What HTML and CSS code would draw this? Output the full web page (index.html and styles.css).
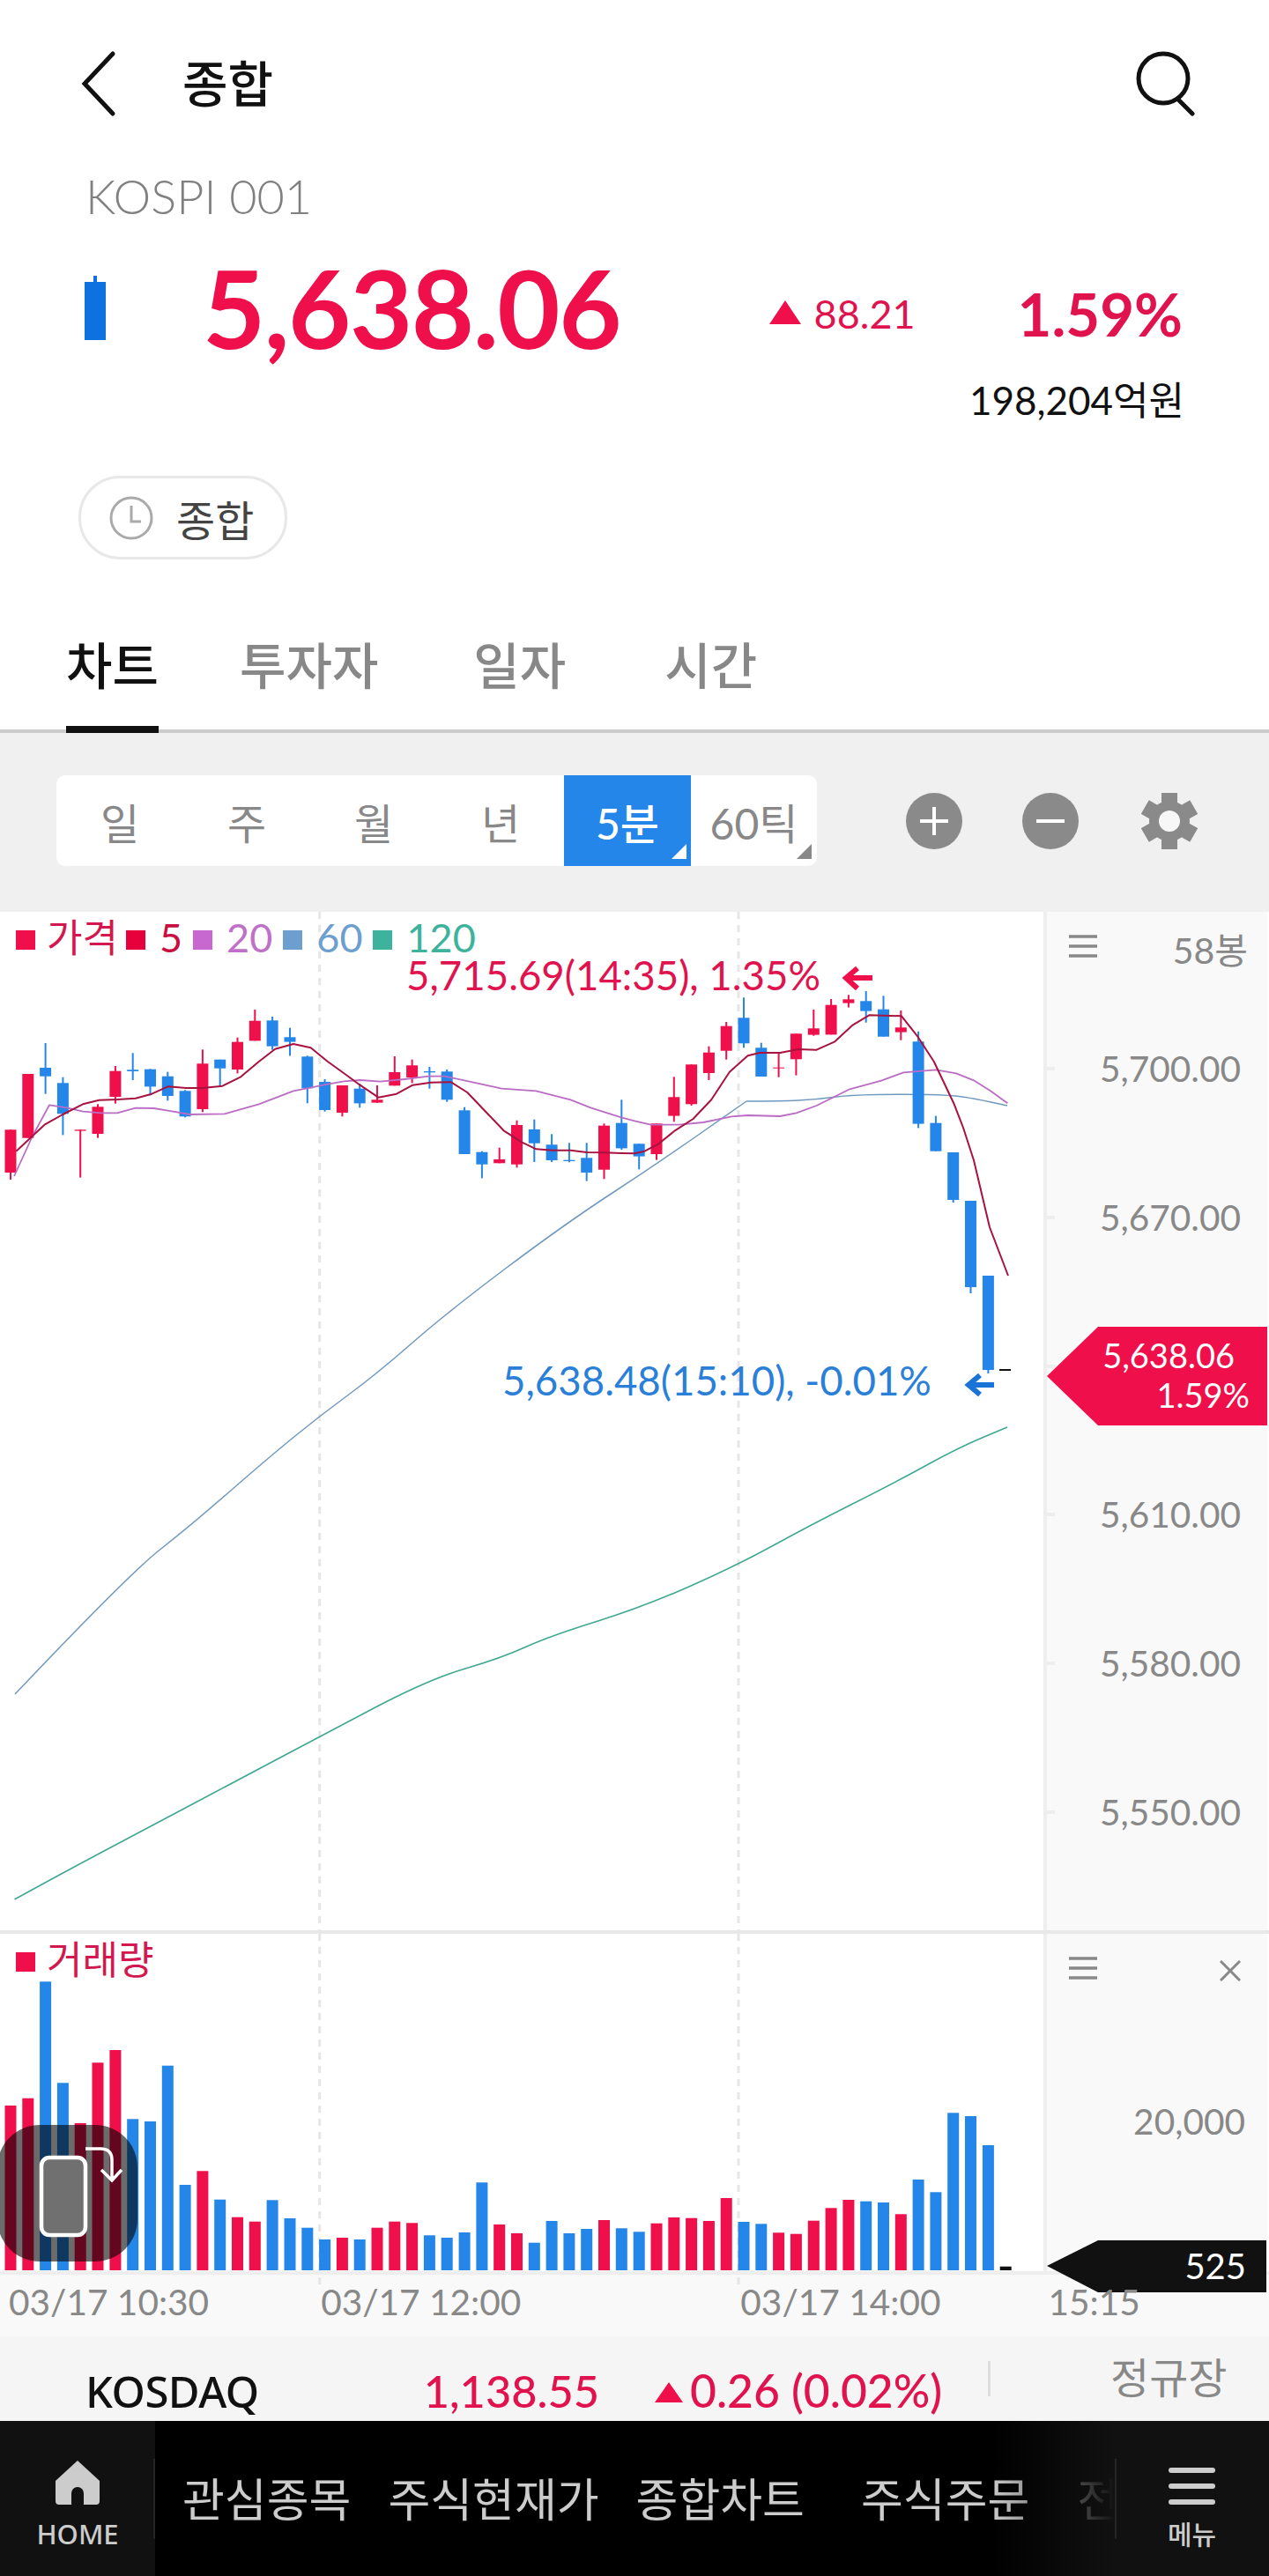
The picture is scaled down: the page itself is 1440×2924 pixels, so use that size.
FILE: index.html
```html
<!DOCTYPE html>
<html lang="ko">
<head>
<meta charset="utf-8">
<title>종합</title>
<link rel="stylesheet" href="styles.css">
</head>
<body>
<main class="page">
  <header class="topbar">
    <svg class="back" viewBox="0 0 40 76"><path d="M36 4 4 38l32 34"/></svg>
    <h1 class="title">종합</h1>
    <svg class="search" viewBox="0 0 72 74"><circle cx="33" cy="31" r="28"/><path d="M49 54 66 71"/></svg>
  </header>

  <section class="quote">
    <div class="code">KOSPI 001</div>
    <div class="price-row">
      <span class="mini-candle"></span>
      <span class="price">5,638.06</span>
      <span class="tri"></span>
      <span class="delta">88.21</span>
      <span class="pct">1.59%</span>
    </div>
    <div class="turnover">198,204억원</div>
    <div class="pill">
      <svg class="clock" viewBox="0 0 50 50"><circle cx="25" cy="25" r="23"/><path d="M25 11V29H36"/></svg>
      <span>종합</span>
    </div>
  </section>

  <nav class="tabs">
    <a class="tab active">차트</a>
    <a class="tab t2">투자자</a>
    <a class="tab t3">일자</a>
    <a class="tab t4">시간</a>
  </nav>

  <section class="toolbar">
    <div class="segment">
      <span class="seg">일</span>
      <span class="seg">주</span>
      <span class="seg">월</span>
      <span class="seg">년</span>
      <span class="seg on">5분</span>
      <span class="seg corner">60틱</span>
    </div>
    <div class="tools">
      <svg class="tool" viewBox="0 0 64 64"><circle cx="32" cy="32" r="32" class="fill"/><path d="M16 32H48M32 16V48" class="glyph"/></svg>
      <svg class="tool" viewBox="0 0 64 64"><circle cx="32" cy="32" r="32" class="fill"/><path d="M16 32H48" class="glyph"/></svg>
      <svg class="tool gear" viewBox="-32 -32 64 64">
        <circle r="23" class="fill"/>
        <rect x="-9" y="-32" width="18" height="16" class="fill"/>
        <rect x="-9" y="-32" width="18" height="16" class="fill" transform="rotate(60)"/>
        <rect x="-9" y="-32" width="18" height="16" class="fill" transform="rotate(120)"/>
        <rect x="-9" y="-32" width="18" height="16" class="fill" transform="rotate(180)"/>
        <rect x="-9" y="-32" width="18" height="16" class="fill" transform="rotate(240)"/>
        <rect x="-9" y="-32" width="18" height="16" class="fill" transform="rotate(300)"/>
        <circle r="12" class="hole"/>
      </svg>
    </div>
  </section>

  <section class="pane price-pane">
    <div class="plot">
      <svg id="priceSvg" class="plot-svg" viewBox="0 1035 1184 1156"></svg>
      <div class="legend">
        <span class="lg c-price"><i></i>가격</span>
        <span class="lg c-5"><i></i>5</span>
        <span class="lg c-20"><i></i>20</span>
        <span class="lg c-60"><i></i>60</span>
        <span class="lg c-120"><i></i>120</span>
      </div>
      <span class="note note-high">5,715.69(14:35), 1.35%</span>
      <span class="note note-low">5,638.48(15:10), -0.01%</span>
    </div>
    <div class="axis" id="priceAxis">
      <svg class="menu-lines" viewBox="0 0 32 26"><path d="M0 2H32M0 13H32M0 24H32"/></svg>
      <span class="count">58봉</span>
      <div class="tag tag-red"><span>5,638.06</span><span class="tag-pct">1.59%</span></div>
    </div>
  </section>

  <section class="pane volume-pane">
    <div class="plot">
      <svg id="volumeSvg" class="plot-svg" viewBox="0 2195 1184 383"></svg>
      <div class="legend vol-legend"><span class="lg c-price"><i></i>거래량</span></div>
      <div class="rotate">
        <svg viewBox="0 0 156 155"><rect x="47" y="37" width="50" height="88" rx="9" class="phone"/><path d="M97 27H114Q127 27 127 40V61M115 51 127 63 138 51" class="turn"/></svg>
      </div>
    </div>
    <div class="axis">
      <svg class="menu-lines" viewBox="0 0 32 26"><path d="M0 2H32M0 13H32M0 24H32"/></svg>
      <svg class="close" viewBox="0 0 24 24"><path d="M1 1 23 23M23 1 1 23"/></svg>
      <span class="tick vol-tick">20,000</span>
      <div class="tag tag-black"><span>525</span></div>
    </div>
  </section>

  <section class="time-axis">
    <span class="time t-a">03/17 10:30</span>
    <span class="time t-b">03/17 12:00</span>
    <span class="time t-c">03/17 14:00</span>
    <span class="time t-d">15:15</span>
  </section>

  <section class="market">
    <span class="m-name">KOSDAQ</span>
    <span class="m-price">1,138.55</span>
    <span class="m-tri"></span>
    <span class="m-change">0.26 (0.02%)</span>
    <span class="m-sep"></span>
    <span class="m-state">정규장</span>
  </section>

  <footer class="bottom">
    <a class="side home">
      <svg class="home-icon" viewBox="0 0 50 51"><path d="M25 0 50 23V46a4 4 0 0 1-4 4H32V37a7 7 0 0 0-14 0V50H4a4 4 0 0 1-4-4V23Z"/></svg>
      <span>HOME</span>
    </a>
    <div class="menu-strip">
      <a class="item">관심종목</a>
      <a class="item">주식현재가</a>
      <a class="item">종합차트</a>
      <a class="item wide">주식주문</a>
      <a class="item wide2">전체메뉴</a>
      <div class="fade"></div>
    </div>
    <a class="side menu">
      <span class="bars"><i></i><i></i><i></i></span>
      <span>메뉴</span>
    </a>
  </footer>
</main>
<script src="chart.js"></script>
</body>
</html>
```

FILE: styles.css
```css
* { box-sizing: border-box; }
html, body { margin: 0; padding: 0; background: #fff; }
body { font-family: Lato, "Noto Sans CJK KR", sans-serif; color: #111; }
.page { width: 1440px; height: 2924px; overflow: hidden; display: flex; flex-direction: column; }

/* top bar */
.topbar { height: 190px; flex: none; display: flex; align-items: center; padding: 0 81px 0 92px; }
.back { width: 40px; height: 76px; flex: none; fill: none; stroke: #111; stroke-width: 5; stroke-linecap: round; }
.title { margin: -6px 0 0 75px; font: 500 56px/1 "Noto Sans CJK KR", sans-serif; flex: 1; color: #111; }
.search { width: 72px; height: 74px; flex: none; fill: none; stroke: #111; stroke-width: 5; stroke-linecap: round; }

/* quote */
.quote { flex: none; height: 445px; display: flex; flex-direction: column; padding: 0 98px 0 96px; }
.code { height: 70px; line-height: 66px; padding-left: 1px; font-size: 54px; font-weight: 300; color: #808080; }
.price-row { height: 180px; display: flex; align-items: center; }
.mini-candle { width: 24px; height: 66px; margin-top: 6px; background: #0d72e0; position: relative; flex: none; }
.mini-candle::before { content: ""; position: absolute; left: 10px; top: -7px; width: 4px; height: 7px; background: #0d72e0; }
.price { margin-left: 110px; margin-top: -3px; flex: 1; font-size: 123px; font-weight: 700; line-height: 1; color: #ef0f4a; letter-spacing: -1.5px; }
.tri { width: 0; height: 0; border-left: 18px solid transparent; border-right: 18px solid transparent; border-bottom: 27px solid #ef0f4a; margin-right: 15px; margin-top: 8px; }
.delta { font-size: 45px; color: #e0134f; line-height: 1; margin-top: 12px; }
.pct { margin-left: 116px; font-size: 67px; font-weight: 700; color: #e0134f; line-height: 1; margin-top: 12px; }
.turnover { height: 28px; line-height: 28px; text-align: right; font-size: 44px; font-weight: 400; color: #111; margin-right: -2px; }
.pill { margin-top: 72px; margin-left: -7px; width: 237px; height: 95px; border: 3px solid #e8e8e8; border-radius: 47px; display: flex; align-items: center; padding-left: 32px; font: 400 48px/1 "Noto Sans CJK KR", sans-serif; color: #444; }
.clock { width: 50px; height: 50px; flex: none; margin-right: 26px; fill: none; stroke: #aaa; stroke-width: 3; }

/* tabs */
.tabs { flex: none; height: 197px; border-bottom: 4px solid #ccc; display: flex; position: relative; padding-left: 75px; }
.tab { font: 500 57px/1 "Noto Sans CJK KR", sans-serif; color: #888; height: 197px; padding-top: 89px; white-space: nowrap; }
.tab.active { width: 105px; flex: none; color: #111; border-bottom: 8px solid #111; display: flex; justify-content: center; }
.t2 { margin-left: 92px; }
.t3 { margin-left: 108px; }
.t4 { margin-left: 112px; }

/* toolbar */
.toolbar { flex: none; height: 203px; background: #f0f0f1; display: flex; align-items: flex-start; padding: 48px 0 0 64px; }
.segment { width: 863px; height: 103px; background: #fff; border-radius: 10px; display: flex; overflow: hidden; }
.seg { width: 144px; flex: none; display: flex; align-items: center; justify-content: center; font-size: 48px; color: #888; position: relative; }
.seg.on { background: #2486e8; color: #fff; font-weight: 500; }
.seg.corner { width: 143px; }
.seg.on::after, .seg.corner::after { content: ""; position: absolute; right: 5px; bottom: 8px; width: 0; height: 0; border-left: 17px solid transparent; border-bottom: 17px solid #fff; }
.seg.corner::after { right: 6px; border-bottom-color: #888; }
.tools { display: flex; gap: 68px; margin-left: 101px; padding-top: 20px; }
.tool { width: 64px; height: 64px; flex: none; }
.gear { margin-left: 3px; }
.fill { fill: #8a8a8a; }
.glyph { stroke: #fff; stroke-width: 4; fill: none; }
.hole { fill: #f7f7f7; }

/* chart panes */
.pane { flex: none; display: flex; position: relative; }
.price-pane { height: 1160px; border-bottom: 4px solid #e8e8e8; }
.volume-pane { height: 387px; border-bottom: 4px solid #eee; z-index: 1; }
.plot { width: 1184px; flex: none; position: relative; background: #fff; }
.plot-svg { position: absolute; left: 0; top: 0; width: 1184px; height: 100%; overflow: visible; }
.price-pane .plot-svg { height: 1156px; }
.volume-pane .plot-svg { height: 383px; }
.axis { flex: 1; background: #f9f9f9; border-left: 4px solid #eee; position: relative; margin-right: 2px; }
.menu-lines { position: absolute; left: 25px; top: 26px; width: 32px; height: 26px; fill: none; stroke: #888; stroke-width: 3.5; }
.count { position: absolute; right: 22px; top: 21px; font-size: 41px; line-height: 46px; color: #888; font-weight: 400; }
.tick { position: absolute; right: 30px; font-size: 40.6px; line-height: 46px; color: #888; font-weight: 400; white-space: nowrap; }
.tick-mark { position: absolute; left: 0; width: 9px; height: 4px; background: #eee; }
.vol-tick { top: 190px; right: 25px; }
.close { position: absolute; right: 30px; top: 30px; width: 24px; height: 24px; fill: none; stroke: #888; stroke-width: 3; }

.tag { position: absolute; display: flex; flex-direction: column; align-items: flex-end; color: #fff; font-weight: 400; }
.tag-red { left: 0; top: 471px; width: 250px; height: 112px; background: #ef0f4a; clip-path: polygon(0 50%, 58px 0, 100% 0, 100% 100%, 58px 100%); font-size: 38px; line-height: 45px; padding: 10px 20px 0 0; }
.tag-red span:first-child { margin-right: 17px; }
.tag-black { left: 0; top: 348px; width: 249px; height: 59px; background: #111; clip-path: polygon(0 49%, 58px 0, 100% 0, 100% 100%, 58px 100%); font-size: 40px; line-height: 59px; padding-right: 23px; }

.legend { position: absolute; left: 18px; top: 4px; display: flex; gap: 12px; font-size: 45px; line-height: 50px; }
.lg { display: flex; align-items: center; gap: 16px; }
.lg i { width: 22px; height: 22px; flex: none; margin-top: 6px; }
.c-price { color: #d3174f; font-size: 44px; margin-right: -3px; gap: 13px; } .c-price i { background: #ef0f4a; }
.c-5 { color: #c8103f; } .c-5 i { background: #e6003c; }
.c-20 { color: #c070c8; } .c-20 i { background: #c767cf; }
.c-60 { color: #6c9fcf; } .c-60 i { background: #6c9fcf; }
.c-120 { color: #3db39e; } .c-120 i { background: #3db39e; }
.vol-legend { top: 4px; }
.note { position: absolute; font-size: 45.6px; line-height: 46px; white-space: nowrap; }
.note-high { left: 461px; top: 49px; color: #e0134f; }
.note-low { left: 570px; top: 509px; color: #2a80d8; }

.rotate { position: absolute; left: -3px; top: 217px; width: 159px; height: 155px; border-radius: 48px; background: rgba(0,0,0,.58); }
.rotate svg { position: absolute; left: 3px; top: 0; width: 156px; height: 155px; }
.phone { fill: #707070; stroke: #fff; stroke-width: 4.5; }
.turn { fill: none; stroke: #fff; stroke-width: 3.5; }

/* time axis */
.time-axis { flex: none; height: 70px; background: #f9f9f9; display: flex; }
.time { position: relative; z-index: 2; font-size: 40.6px; line-height: 62px; color: #888; font-weight: 400; white-space: nowrap; }
.t-a { margin-left: 10px; }
.t-b { margin-left: 127px; }
.t-c { margin-left: 249px; }
.t-d { margin-left: 122px; }

/* KOSDAQ strip */
.market { flex: none; height: 96px; background: #f5f5f5; display: flex; align-items: center; padding-left: 97px; position: relative; }
.m-name { font: 500 49px/1 "Noto Sans", sans-serif; color: #111; margin-top: 28px; letter-spacing: -.5px; }
.m-price { margin-left: 187px; font-size: 50.5px; font-weight: 500; color: #e0134f; line-height: 1; margin-top: 28px; }
.m-tri { width: 0; height: 0; margin-left: 63px; margin-top: 30px; border-left: 16px solid transparent; border-right: 16px solid transparent; border-bottom: 23px solid #ef0f4a; }
.m-change { margin-left: 8px; font-size: 51.6px; font-weight: 500; color: #e0134f; line-height: 1; margin-top: 28px; }
.m-sep { position: absolute; left: 1121px; top: 28px; width: 3px; height: 40px; background: #ddd; }
.m-state { position: absolute; left: 1260px; top: 20px; font: 400 48px/1 "Noto Sans CJK KR", sans-serif; color: #888; }

/* bottom nav */
.bottom { flex: none; height: 176px; background: #000; display: flex; }
.side { flex: none; background: #111; display: flex; flex-direction: column; align-items: center; color: #ccc; font: 500 31px/1 "Noto Sans", sans-serif; position: relative; }
.side::after { content: ""; position: absolute; top: 43px; height: 91px; width: 2px; background: #262626; }
.home { width: 176px; padding-top: 45px; }
.home::after { right: 0; }
.home-icon { width: 50px; height: 51px; fill: #ccc; margin-bottom: 17px; display: block; }
.menu { width: 175px; padding-top: 53px; font: 500 30px/1 "Noto Sans CJK KR", sans-serif; }
.menu::after { left: 0; }
.bars { display: flex; flex-direction: column; gap: 12px; margin-bottom: 17px; }
.bars i { width: 53px; height: 6px; background: #ccc; border-radius: 3px; display: block; }
.menu-strip { flex: 1; position: relative; overflow: hidden; display: flex; align-items: center; padding-left: 31px; gap: 42px; white-space: nowrap; }
.item { font: 400 52px/1 "Noto Sans CJK KR", sans-serif; color: #ccc; flex: none; margin-top: -2px; }
.wide { margin-left: 22px; }
.wide2 { margin-left: 12px; }
.fade { position: absolute; right: 0; top: 0; bottom: 0; width: 140px; background: linear-gradient(to right, rgba(17,17,17,0), #111); }
```

FILE: chart.js
```js
// Page coordinates. Vertical values below are quoted in thirds of a pixel from y=1020.
var X0 = 12, STEP = 19.81, BODY = 13;
var RED = '#ef0f4a', BLUE = '#2486e8', INK = '#111';
var NS_Y = function (p) { return 1020 + p / 3; };
var L = function (p) { return p / 2.178; };
var R = function (p) { return 720 + p / 2.178; };

// colour, high, body top, body bottom, low
var candles = [
  ['r',787,787,933,957],['r',597,597,815,815],['b',492,576,605,665],['b',608,628,733,805],
  ['r',787,787,791,950],['r',700,709,801,815],['r',570,587,675,698],['b',526,583,588,618],
  ['b',580,581,640,670],['b',590,605,672,688],['b',652,655,742,745],['r',514,562,717,727],
  ['b',548,548,578,640],['r',473,488,582,595],['r',378,416,484,484],['b',402,415,503,515],
  ['b',440,472,488,535],['b',535,538,646,697],['b',615,624,720,725],['r',636,636,729,742],
  ['b',630,647,697,712],['r',636,685,695,695],['r',537,591,637,637],['r',548,568,609,628],
  ['b',573,588,592,647],['b',582,589,685,692],['b',710,721,870,870],['b',860,863,905,952],
  ['r',848,888,901,901],['r',755,771,905,916],['b',752,786,833,897],['b',802,838,891,897],
  ['b',832,890,894,898],['b',832,883,933,962],['r',766,773,923,955],['b',685,764,850,855],
  ['b',835,835,878,922],['r',766,766,870,890],['r',607,676,740,760],['r',565,565,700,705],
  ['r',503,524,594,618],['r',420,434,518,548],['b',337,406,493,508],['b',491,508,606,606],
  ['r',522,575,578,608],['r',460,460,547,602],['r',378,442,464,467],['r',342,362,463,463],
  ['r',328,343,356,371],['b',315,349,383,422],['b',331,377,470,470],['r',381,439,455,482],
  ['b',452,487,767,781],['b',740,764,860,860],['b',864,864,1026,1035],['b',1029,1029,1323,1344],
  ['b',1284,1284,1605,1617]
];

// volume: colour and bar top, thirds of a pixel from y=2180
var volumes = [
  ['r',630],['r',605],['b',208],['b',553],['r',690],['r',484],['r',441],['b',676],['b',684],['b',494],
  ['b',900],['r',853],['b',950],['r',1010],['r',1025],['b',952],['b',1014],['b',1046],['b',1086],['r',1080],
  ['b',1086],['r',1046],['r',1025],['r',1030],['b',1072],['b',1080],['b',1062],['b',892],['r',1035],['r',1065],
  ['b',1097],['b',1023],['b',1065],['b',1050],['r',1020],['b',1048],['b',1060],['r',1031],['r',1011],['r',1013],
  ['r',1023],['r',945],['b',1026],['b',1033],['r',1063],['r',1067],['r',1022],['r',979],['r',951],['b',956],
  ['b',960],['r',1000],['b',882],['b',925],['b',655],['b',666],['b',765],['k',1178]
];

function pts(list, fx) {
  return list.map(function (p) { return fx(p[0]).toFixed(1) + ',' + NS_Y(p[1]).toFixed(1); }).join(' ');
}
function line(points, color, width) {
  return '<polyline fill="none" stroke-linejoin="round" stroke="' + color + '" stroke-width="' + width + '" points="' + points + '"/>';
}
// Rounds a list of points by running quadratic curves through the midpoints.
function smooth(points, color, width) {
  var a = points.split(' ').map(function (s) { return s.split(',').map(Number); });
  var d = 'M' + a[0];
  for (var i = 1; i < a.length - 1; i++) {
    var mx = (a[i][0] + a[i + 1][0]) / 2, my = (a[i][1] + a[i + 1][1]) / 2;
    d += 'Q' + a[i] + ' ' + mx + ',' + my;
  }
  d += 'L' + a[a.length - 1];
  return '<path fill="none" stroke="' + color + '" stroke-width="' + width + '" d="' + d + '"/>';
}

var ma5 = pts([[40,860],[75,815],[110,770],[155,735],[205,700],[245,686],[290,684],[335,680],[375,665],[415,640],[460,645],[500,645],[550,638],[595,607],[640,555],[680,512],[725,495],[768,508],[810,555],[850,595],[890,635],[935,677],[980,665],[1020,635],[1065,626],[1115,625],[1155,660],[1200,725],[1245,790],[1290,830],[1325,853],[1365,857],[1410,857],[1450,864],[1495,865],[1535,867]], L) + ' ' +
  pts([[0,868],[25,860],[60,835],[100,790],[145,750],[190,685],[235,590],[280,535],[310,525],[360,525],[405,513],[450,515],[495,487],[540,430],[580,397],[660,400],[700,470],[740,555],[790,700]], R) +
  ' 1093,1280 1105,1317 1123,1393 1144,1448';
var ma20 = pts([[35,945],[80,810],[122,703],[165,712],[205,725],[250,730],[290,730],[335,713],[380,714],[415,722],[470,735],[555,733],[640,700],[725,655],[770,643],[810,632],[850,622],[890,618],[940,623],[1000,615],[1060,605],[1100,605],[1150,620],[1240,647],[1325,655],[1410,685],[1460,712],[1535,745]], L) + ' ' +
  pts([[0,757],[40,770],[110,770],[170,762],[240,742],[280,738],[360,741],[400,730],[450,705],[530,650],[610,620],[665,592],[745,583],[795,595],[840,620],[880,655],[922,697]], R);
var ma60a = '17,1923 147,1786 216,1732 303,1656 363,1607 427,1560 507,1490 640,1390 747,1320 847,1250';
var ma60b = '847,1250 885,1250 927,1248 963,1243 1028,1242 1078,1243 1106,1247 1143,1255';
var ma120 = '16.5,2156 60,2132 165,2076 275,2018 363,1971 487,1906 569,1882 624,1857 730,1824 836,1777 918,1732 1019,1681 1088,1643 1143,1620';

function grid(y1, y2) {
  return [362.7, 838].map(function (x) {
    return '<line x1="' + x + '" x2="' + x + '" y1="' + y1 + '" y2="' + y2 + '" stroke="#e6e6e6" stroke-width="3" stroke-dasharray="8 7"/>';
  }).join('');
}
function rect(x, y, w, h, c) {
  return '<rect x="' + x.toFixed(1) + '" y="' + y.toFixed(1) + '" width="' + w + '" height="' + Math.max(h, 1).toFixed(1) + '" fill="' + c + '"/>';
}

var p = grid(1035, 2191);
p += smooth(ma120, '#3fa890', 1.6) + smooth(ma60a, '#7099bf', 1.5) + smooth(ma60b, '#7099bf', 1.5);
candles.forEach(function (c, i) {
  var x = X0 + i * STEP, col = c[0] === 'r' ? RED : BLUE;
  p += rect(x - 1, NS_Y(c[1]), 2, (c[4] - c[1]) / 3, col);
  p += rect(x - BODY / 2, NS_Y(c[2]), BODY, (c[3] - c[2]) / 3, col);
});
p += rect(1134, 1554, 13, 2, INK);
p += line(ma20, '#bb6cc4', 1.8) + line(ma5, '#a8123f', 2);
p += '<path d="M990 1110H961M973 1099 960 1110 973 1122" fill="none" stroke="#ef0f4a" stroke-width="6"/>';
p += '<path d="M1128 1572H1099M1112 1561 1099 1572 1112 1583" fill="none" stroke="#1a74d8" stroke-width="6"/>';
document.getElementById('priceSvg').innerHTML = p;

var v = grid(2195, 2595);
volumes.forEach(function (b, i) {
  var x = X0 + i * STEP, top = 2180 + b[1] / 3, col = b[0] === 'r' ? RED : b[0] === 'b' ? BLUE : INK;
  v += rect(x - BODY / 2, top, BODY, 2577 - top, col);
});
document.getElementById('volumeSvg').innerHTML = v;

// price axis: y follows from the value
var axis = document.getElementById('priceAxis');
[5700, 5670, 5640, 5610, 5580, 5550].forEach(function (value) {
  var y = 1213 + (5700 - value) * 5.627 - 1035;
  var mark = document.createElement('span');
  mark.className = 'tick-mark';
  mark.style.top = (y - 2) + 'px';
  axis.insertBefore(mark, axis.firstChild);
  if (value === 5640) return;
  var label = document.createElement('span');
  label.className = 'tick';
  label.textContent = value.toLocaleString('en-US', { minimumFractionDigits: 2 });
  label.style.top = (y - 23) + 'px';
  axis.insertBefore(label, axis.firstChild);
});
```
